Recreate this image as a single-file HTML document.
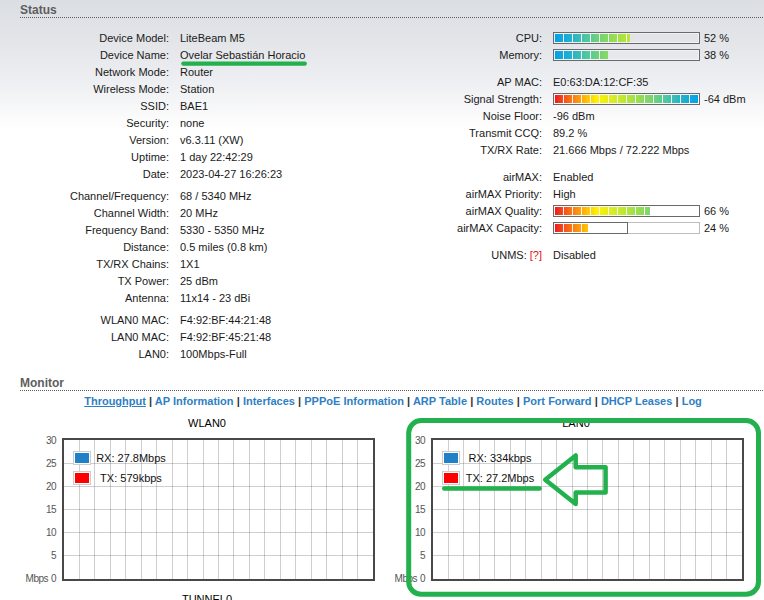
<!DOCTYPE html>
<html><head><meta charset="utf-8"><title>Status</title>
<style>
html,body{margin:0;padding:0}
body{width:764px;height:600px;overflow:hidden;position:relative;font-family:"Liberation Sans",Arial,sans-serif;font-size:11px;color:#1a1a1a;
background:linear-gradient(to bottom,#dbdee3 0px,#e3e5e9 42px,#eff0f3 85px,#fafafb 115px,#ffffff 131px)}
.l,.v,.h,.ct,.yl,.lt,.nav{position:absolute;white-space:nowrap;line-height:16px}
.l{text-align:right}
.h{font-weight:bold;font-size:12px;color:#5e5e5e;left:20px}
.dot{position:absolute;left:20px;right:0;height:1px;background:repeating-linear-gradient(90deg,#5c5c5c 0,#5c5c5c 1px,transparent 1px,transparent 2px)}
.q{color:#e01010}
.bar{position:absolute;width:145px;height:10px;border:1px solid #6a6a6a;box-shadow:inset 0 0 0 1px rgba(255,255,255,.45)}
.bar.light{border-color:#bdbdbd;background:#fff}
.fill{position:absolute;left:1px;top:1px;height:8px}
.capb{position:absolute;left:-1px;top:-1px;height:10px;border:1px solid #6a6a6a}
.nav{left:84.2px;word-spacing:.08px;top:393px;font-weight:bold;color:#333}
.nav a{color:#2e7fc4;text-decoration:none}
.nav a.cur{text-decoration:underline}
.ct{text-align:center;font-size:11px;color:#000;line-height:14px}
.chart{position:absolute;width:309px;height:139px;border:2px solid #484848;background:#fff}
.gv{position:absolute;top:440px;width:1px;height:139px;background:rgba(0,0,0,.19)}
.gh{position:absolute;width:309px;height:1px;background:rgba(0,0,0,.19)}
.yl{font-size:10px;letter-spacing:-0.5px;color:#555;text-align:right;line-height:14px}
.sw{position:absolute;width:14px;height:10px;padding:1px;border:1px solid #ccc;background:#fff}
.sw div{width:14px;height:10px}
.lt{text-align:center;color:#111}
svg{position:absolute;left:0;top:0}
</style></head><body>
<div class="h" style="top:2px">Status</div><div class="dot" style="top:17px"></div>
<div class="h" style="top:375px">Monitor</div><div class="dot" style="top:390px"></div>
<div class="nav"><a class="cur">Throughput</a> | <a>AP Information</a> | <a>Interfaces</a> | <a>PPPoE Information</a> | <a>ARP Table</a> | <a>Routes</a> | <a>Port Forward</a> | <a>DHCP Leases</a> | <a>Log</a></div>
<div class="l" style="top:30px;left:0;width:169px">Device Model:</div><div class="v" style="top:30px;left:180px">LiteBeam M5</div>
<div class="l" style="top:47px;left:0;width:169px">Device Name:</div><div class="v" style="top:47px;left:180px">Ovelar Sebastián Horacio</div>
<div class="l" style="top:64px;left:0;width:169px">Network Mode:</div><div class="v" style="top:64px;left:180px">Router</div>
<div class="l" style="top:81px;left:0;width:169px">Wireless Mode:</div><div class="v" style="top:81px;left:180px">Station</div>
<div class="l" style="top:98px;left:0;width:169px">SSID:</div><div class="v" style="top:98px;left:180px">BAE1</div>
<div class="l" style="top:115px;left:0;width:169px">Security:</div><div class="v" style="top:115px;left:180px">none</div>
<div class="l" style="top:132px;left:0;width:169px">Version:</div><div class="v" style="top:132px;left:180px">v6.3.11 (XW)</div>
<div class="l" style="top:149px;left:0;width:169px">Uptime:</div><div class="v" style="top:149px;left:180px">1 day 22:42:29</div>
<div class="l" style="top:166px;left:0;width:169px">Date:</div><div class="v" style="top:166px;left:180px">2023-04-27 16:26:23</div>
<div class="l" style="top:188px;left:0;width:169px">Channel/Frequency:</div><div class="v" style="top:188px;left:180px">68 / 5340 MHz</div>
<div class="l" style="top:205px;left:0;width:169px">Channel Width:</div><div class="v" style="top:205px;left:180px">20 MHz</div>
<div class="l" style="top:222px;left:0;width:169px">Frequency Band:</div><div class="v" style="top:222px;left:180px">5330 - 5350 MHz</div>
<div class="l" style="top:239px;left:0;width:169px">Distance:</div><div class="v" style="top:239px;left:180px">0.5 miles (0.8 km)</div>
<div class="l" style="top:256px;left:0;width:169px">TX/RX Chains:</div><div class="v" style="top:256px;left:180px">1X1</div>
<div class="l" style="top:273px;left:0;width:169px">TX Power:</div><div class="v" style="top:273px;left:180px">25 dBm</div>
<div class="l" style="top:290px;left:0;width:169px">Antenna:</div><div class="v" style="top:290px;left:180px">11x14 - 23 dBi</div>
<div class="l" style="top:312px;left:0;width:169px">WLAN0 MAC:</div><div class="v" style="top:312px;left:180px">F4:92:BF:44:21:48</div>
<div class="l" style="top:329px;left:0;width:169px">LAN0 MAC:</div><div class="v" style="top:329px;left:180px">F4:92:BF:45:21:48</div>
<div class="l" style="top:346px;left:0;width:169px">LAN0:</div><div class="v" style="top:346px;left:180px">100Mbps-Full</div>
<div class="l" style="top:30px;left:382px;width:160px">CPU:</div>
<div class="l" style="top:47px;left:382px;width:160px">Memory:</div>
<div class="l" style="top:74px;left:382px;width:160px">AP MAC:</div>
<div class="v" style="top:74px;left:553px">E0:63:DA:12:CF:35</div>
<div class="l" style="top:91px;left:382px;width:160px">Signal Strength:</div>
<div class="l" style="top:108px;left:382px;width:160px">Noise Floor:</div>
<div class="v" style="top:108px;left:553px">-96 dBm</div>
<div class="l" style="top:125px;left:382px;width:160px">Transmit CCQ:</div>
<div class="v" style="top:125px;left:553px">89.2 %</div>
<div class="l" style="top:142px;left:382px;width:160px">TX/RX Rate:</div>
<div class="v" style="top:142px;left:553px">21.666 Mbps / 72.222 Mbps</div>
<div class="l" style="top:169px;left:382px;width:160px">airMAX:</div>
<div class="v" style="top:169px;left:553px">Enabled</div>
<div class="l" style="top:186px;left:382px;width:160px">airMAX Priority:</div>
<div class="v" style="top:186px;left:553px">High</div>
<div class="l" style="top:203px;left:382px;width:160px">airMAX Quality:</div>
<div class="l" style="top:220px;left:382px;width:160px">airMAX Capacity:</div>
<div class="l" style="top:247px;left:382px;width:160px">UNMS: <span class="q">[?]</span></div>
<div class="v" style="top:247px;left:553px">Disabled</div>
<div class="bar" style="top:32px;left:553px"><div class="fill" style="width:75px;background:repeating-linear-gradient(90deg,transparent 0,transparent 8px,#f2f3f4 8px,#f2f3f4 9px),linear-gradient(90deg,#00a2e8 0,#20b0d0 15px,#4cc6a4 31px,#7cd66c 48px,#a4e244 65px,#c0e830 75px,#e4ee18 89px,#fff200 101px,#ffe000 105px,#fc9010 121px,#f6501a 134px,#ed1c24 143px);background-size:auto,143px 8px;background-repeat:repeat,no-repeat"></div></div><div class="v" style="top:30px;left:704px">52 %</div>
<div class="bar" style="top:49px;left:553px"><div class="fill" style="width:53px;background:repeating-linear-gradient(90deg,transparent 0,transparent 8px,#f2f3f4 8px,#f2f3f4 9px),linear-gradient(90deg,#00a2e8 0,#20b0d0 15px,#4cc6a4 31px,#7cd66c 48px,#a4e244 65px,#c0e830 75px,#e4ee18 89px,#fff200 101px,#ffe000 105px,#fc9010 121px,#f6501a 134px,#ed1c24 143px);background-size:auto,143px 8px;background-repeat:repeat,no-repeat"></div></div><div class="v" style="top:47px;left:704px">38 %</div>
<div class="bar" style="top:93px;left:553px"><div class="fill" style="width:143px;background:repeating-linear-gradient(90deg,transparent 0,transparent 8px,#f2f3f4 8px,#f2f3f4 9px),linear-gradient(90deg,#ed1c24 0,#f6501a 9px,#fc9010 22px,#ffe000 38px,#fff200 42px,#e4ee18 54px,#c0e830 68px,#a4e244 78px,#7cd66c 95px,#4cc6a4 112px,#20b0d0 128px,#00a2e8 143px);background-size:auto,143px 8px;background-repeat:repeat,no-repeat"></div></div><div class="v" style="top:91px;left:704px">-64 dBm</div>
<div class="bar" style="top:205px;left:553px"><div class="fill" style="width:95px;background:repeating-linear-gradient(90deg,transparent 0,transparent 8px,#f2f3f4 8px,#f2f3f4 9px),linear-gradient(90deg,#ed1c24 0,#f6501a 9px,#fc9010 22px,#ffe000 38px,#fff200 42px,#e4ee18 54px,#c0e830 68px,#a4e244 78px,#7cd66c 95px,#4cc6a4 112px,#20b0d0 128px,#00a2e8 143px);background-size:auto,143px 8px;background-repeat:repeat,no-repeat"></div></div><div class="v" style="top:203px;left:704px">66 %</div>
<div class="bar light" style="top:222px;left:553px"><div class="capb" style="width:73px"></div><div class="fill" style="width:33px;background:repeating-linear-gradient(90deg,transparent 0,transparent 8px,#f2f3f4 8px,#f2f3f4 9px),linear-gradient(90deg,#ed1c24 0,#f6501a 9px,#fc9010 22px,#ffe000 38px,#fff200 42px,#e4ee18 54px,#c0e830 68px,#a4e244 78px,#7cd66c 95px,#4cc6a4 112px,#20b0d0 128px,#00a2e8 143px);background-size:auto,143px 8px;background-repeat:repeat,no-repeat"></div></div><div class="v" style="top:220px;left:704px">24 %</div>
<div class="ct" style="left:147px;top:416px;width:120px">WLAN0</div><div class="chart" style="left:62px;top:438px"></div><b class="gv" style="left:79px"></b><b class="gv" style="left:94px"></b><b class="gv" style="left:110px"></b><b class="gv" style="left:125px"></b><b class="gv" style="left:141px"></b><b class="gv" style="left:156px"></b><b class="gv" style="left:172px"></b><b class="gv" style="left:187px"></b><b class="gv" style="left:203px"></b><b class="gv" style="left:218px"></b><b class="gv" style="left:233px"></b><b class="gv" style="left:249px"></b><b class="gv" style="left:264px"></b><b class="gv" style="left:280px"></b><b class="gv" style="left:295px"></b><b class="gv" style="left:311px"></b><b class="gv" style="left:326px"></b><b class="gv" style="left:342px"></b><b class="gv" style="left:357px"></b><b class="gh" style="left:64px;top:463px"></b><b class="gh" style="left:64px;top:486px"></b><b class="gh" style="left:64px;top:509px"></b><b class="gh" style="left:64px;top:532px"></b><b class="gh" style="left:64px;top:555px"></b><div class="yl" style="left:16px;top:434.0px;width:40px">30</div><div class="yl" style="left:16px;top:457.1px;width:40px">25</div><div class="yl" style="left:16px;top:480.1px;width:40px">20</div><div class="yl" style="left:16px;top:503.1px;width:40px">15</div><div class="yl" style="left:16px;top:526.2px;width:40px">10</div><div class="yl" style="left:16px;top:549.2px;width:40px">5</div><div class="yl" style="left:16px;top:572.3px;width:40px">0</div><div class="yl" style="left:8px;top:572.3px;width:40px">Mbps</div><div class="sw" style="left:73px;top:451px"><div style="background:#2080c8"></div></div><div class="lt" style="left:92px;top:450px;width:78px">RX: 27.8Mbps</div><div class="sw" style="left:73px;top:471px"><div style="background:#ff0000"></div></div><div class="lt" style="left:92px;top:470px;width:78px">TX: 579kbps</div>
<div class="ct" style="left:516px;top:416px;width:120px">LAN0</div><div class="chart" style="left:431px;top:438px"></div><b class="gv" style="left:448px"></b><b class="gv" style="left:463px"></b><b class="gv" style="left:479px"></b><b class="gv" style="left:494px"></b><b class="gv" style="left:510px"></b><b class="gv" style="left:525px"></b><b class="gv" style="left:541px"></b><b class="gv" style="left:556px"></b><b class="gv" style="left:572px"></b><b class="gv" style="left:587px"></b><b class="gv" style="left:602px"></b><b class="gv" style="left:618px"></b><b class="gv" style="left:633px"></b><b class="gv" style="left:649px"></b><b class="gv" style="left:664px"></b><b class="gv" style="left:680px"></b><b class="gv" style="left:695px"></b><b class="gv" style="left:711px"></b><b class="gv" style="left:726px"></b><b class="gh" style="left:433px;top:463px"></b><b class="gh" style="left:433px;top:486px"></b><b class="gh" style="left:433px;top:509px"></b><b class="gh" style="left:433px;top:532px"></b><b class="gh" style="left:433px;top:555px"></b><div class="yl" style="left:385px;top:434.0px;width:40px">30</div><div class="yl" style="left:385px;top:457.1px;width:40px">25</div><div class="yl" style="left:385px;top:480.1px;width:40px">20</div><div class="yl" style="left:385px;top:503.1px;width:40px">15</div><div class="yl" style="left:385px;top:526.2px;width:40px">10</div><div class="yl" style="left:385px;top:549.2px;width:40px">5</div><div class="yl" style="left:385px;top:572.3px;width:40px">0</div><div class="yl" style="left:377px;top:572.3px;width:40px">Mbps</div><div class="sw" style="left:442px;top:451px"><div style="background:#2080c8"></div></div><div class="lt" style="left:461px;top:450px;width:78px">RX: 334kbps</div><div class="sw" style="left:442px;top:471px"><div style="background:#ff0000"></div></div><div class="lt" style="left:461px;top:470px;width:78px">TX: 27.2Mbps</div>
<div class="ct" style="left:147px;top:592px;width:120px">TUNNEL0</div>
<svg width="764" height="600" viewBox="0 0 764 600" fill="none" stroke="#22b14c" stroke-linecap="round" stroke-linejoin="round">
<line x1="183.4" y1="63.6" x2="304.7" y2="63.6" stroke-width="4.4"/>
<rect x="408.7" y="420.5" width="349.8" height="173.8" rx="12.5" ry="12.5" stroke-width="5"/>
<line x1="444.2" y1="488.5" x2="539.6" y2="488.5" stroke-width="4.5"/>
<path d="M545.2 479.7 L575.7 455.5 L575.7 467.3 L605.6 467.3 L605.6 492.5 L575.7 492.5 L575.7 504 Z" stroke-width="4.5"/>
</svg>
</body></html>
